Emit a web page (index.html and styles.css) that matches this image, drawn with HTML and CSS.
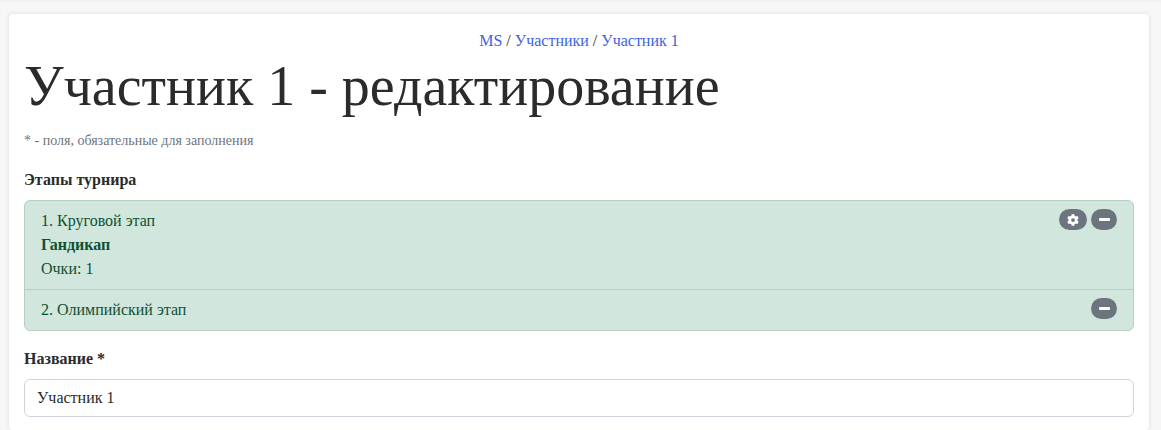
FILE: index.html
```html
<!DOCTYPE html>
<html lang="ru">
<head>
	<meta charset="utf-8">
	<title>Участник 1 - редактирование</title>
	<link rel="stylesheet" href="styles.css">
</head>
<body>
	<div class="card">
		<p class="breadcrumbs"><a href="#">MS</a> / <a href="#">Участники</a> / <a href="#">Участник 1</a></p>
		<h1>Участник 1 - редактирование</h1>
		<p class="hint">* - поля, обязательные для заполнения</p>
		<p class="label">Этапы турнира</p>
		<ul class="stages">
			<li class="stage">
				<div class="stage-info">
					<div>1. Круговой этап</div>
					<div class="stage-type">Гандикап</div>
					<div>Очки: 1</div>
				</div>
				<div class="stage-buttons">
					<span class="pill pill-gear">
						<svg class="icon-gear" viewBox="0 0 512 512"><path d="M487 316l-43-25a195 195 0 0 0 0-70l43-25c5-3 7-9 6-14-11-36-30-68-55-95-4-4-10-5-15-2l-43 25a190 190 0 0 0-61-35V25c0-6-4-11-9-12-37-8-75-8-110 0-6 1-9 6-9 12v50a196 196 0 0 0-61 35L87 85c-5-3-11-2-15 2-25 27-44 59-55 95-2 5 1 11 6 14l43 25a195 195 0 0 0 0 70l-43 25c-5 3-7 9-6 14 11 36 30 68 55 95 4 4 10 5 15 2l43-25a190 190 0 0 0 61 35v50c0 6 4 11 9 12 37 8 75 8 110 0 6-1 9-6 9-12v-50a196 196 0 0 0 61-35l43 25c5 3 11 2 15-2 25-27 44-59 55-95 2-5-1-11-6-14zM256 336a80 80 0 1 1 0-160 80 80 0 0 1 0 160z"/></svg>
					</span>
					<span class="pill"><span class="minus"></span></span>
				</div>
			</li>
			<li class="stage">
				<div class="stage-info">
					<div>2. Олимпийский этап</div>
				</div>
				<div class="stage-buttons">
					<span class="pill"><span class="minus"></span></span>
				</div>
			</li>
		</ul>
		<p class="label">Название *</p>
		<input class="text-input" value="Участник 1">
	</div>
</body>
</html>
```

FILE: styles.css
```css
body {
	margin: 0;
	padding: 14px 12px 0 9px;
	height: 430px;
	box-sizing: border-box;
	overflow: hidden;
	background: #f7f7f8;
	box-shadow: inset 0 2px 2px rgba(0, 0, 0, .03);
	color: #2b2b2b;
	font-family: "Liberation Serif", serif;
	font-size: 16px;
	line-height: 24px;
}
.card {
	height: 100%;
	box-sizing: border-box;
	padding: 15px 15px 0;
	background: #fff;
	border-radius: 4px;
	box-shadow: 0 0 4px rgba(60, 50, 100, .14);
}
.breadcrumbs {
	margin: 0;
	text-align: center;
}
.breadcrumbs a {
	color: #4263df;
	text-decoration: none;
}
h1 {
	margin: 0;
	font-size: 56px;
	font-weight: normal;
	line-height: 67px;
}
.hint {
	margin: 10px 0 0;
	font-size: 14px;
	line-height: 21px;
	color: #6c757d;
}
.label {
	margin: 17px 0 8px;
	font-weight: bold;
}
.stages {
	margin: 0;
	padding: 0;
	list-style: none;
	background: #d1e7dd;
	border: 1px solid #b5cfc3;
	border-radius: 6px;
	color: #0f5132;
}
.stage {
	display: flex;
	justify-content: space-between;
	padding: 8px 16px;
}
.stage + .stage {
	border-top: 1px solid #b5cfc3;
}
.stage-type {
	font-weight: bold;
}
.stage-buttons {
	display: flex;
	gap: 4px;
}
.pill {
	display: flex;
	align-items: center;
	justify-content: center;
	width: 26px;
	height: 21px;
	background: #6c757d;
	border-radius: 11px;
}
.pill-gear {
	width: 28px;
}
.icon-gear {
	width: 12px;
	height: 12px;
	fill: #fff;
}
.minus {
	width: 11px;
	height: 3px;
	background: #fff;
	border-radius: 1px;
}
.stages + .label {
	margin-top: 16px;
}
.text-input {
	display: block;
	width: 100%;
	height: 38px;
	box-sizing: border-box;
	padding: 6px 12px;
	border: 1px solid #ced4da;
	border-radius: 6px;
	background: #fff;
	color: #2b2b2b;
	font: inherit;
}
```
